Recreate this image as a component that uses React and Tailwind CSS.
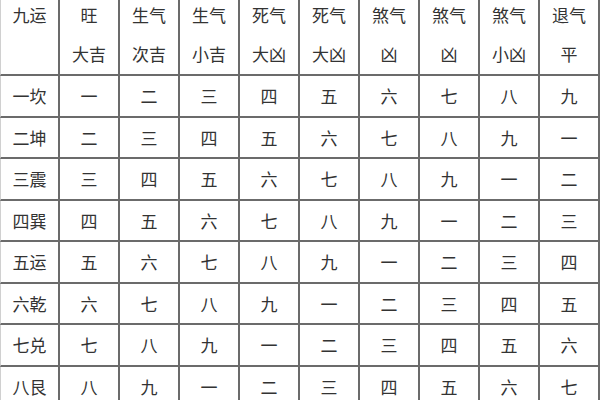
import React from "react";

const nums = ["一", "二", "三", "四", "五", "六", "七", "八", "九"];

const header = [
  ["九运", ""],
  ["旺", "大吉"],
  ["生气", "次吉"],
  ["生气", "小吉"],
  ["死气", "大凶"],
  ["死气", "大凶"],
  ["煞气", "凶"],
  ["煞气", "凶"],
  ["煞气", "小凶"],
  ["退气", "平"],
];

const rowNames = ["一坎", "二坤", "三震", "四巽", "五运", "六乾", "七兑", "八艮", "九离"];

const rows = rowNames.map((name, i) => [
  name,
  ...nums.map((_, j) => nums[(i + j) % 9]),
]);

export default function App() {
  return (
    <div
      className="w-[600px] h-[400px] overflow-hidden bg-white text-[#333] text-[17px]"
      style={{ fontFamily: '"Noto Sans CJK SC", "Noto Sans", sans-serif' }}
    >
      <div className="grid grid-cols-10 w-[600px]">
        {header.map(([a, b], i) => (
          <div
            key={i}
            className={`h-[76px] border-r-2 border-b-2 border-[#6b6b6b] text-center ${
              i === 0 ? "border-l border-l-[#d0d0d0]" : ""
            }`}
          >
            <div className="-mt-[5px] leading-[39px]">
              <div>{a}</div>
              <div>{b || "\u00a0"}</div>
            </div>
          </div>
        ))}
        {rows.map((r, ri) =>
          r.map((c, ci) => (
            <div
              key={ri + "-" + ci}
              className={`h-[41.5px] border-r-2 border-b-2 border-[#6b6b6b] flex items-center justify-center ${
                ci === 0 ? "border-l border-l-[#d0d0d0]" : ""
              }`}
            >
              {c}
            </div>
          ))
        )}
      </div>
    </div>
  );
}
